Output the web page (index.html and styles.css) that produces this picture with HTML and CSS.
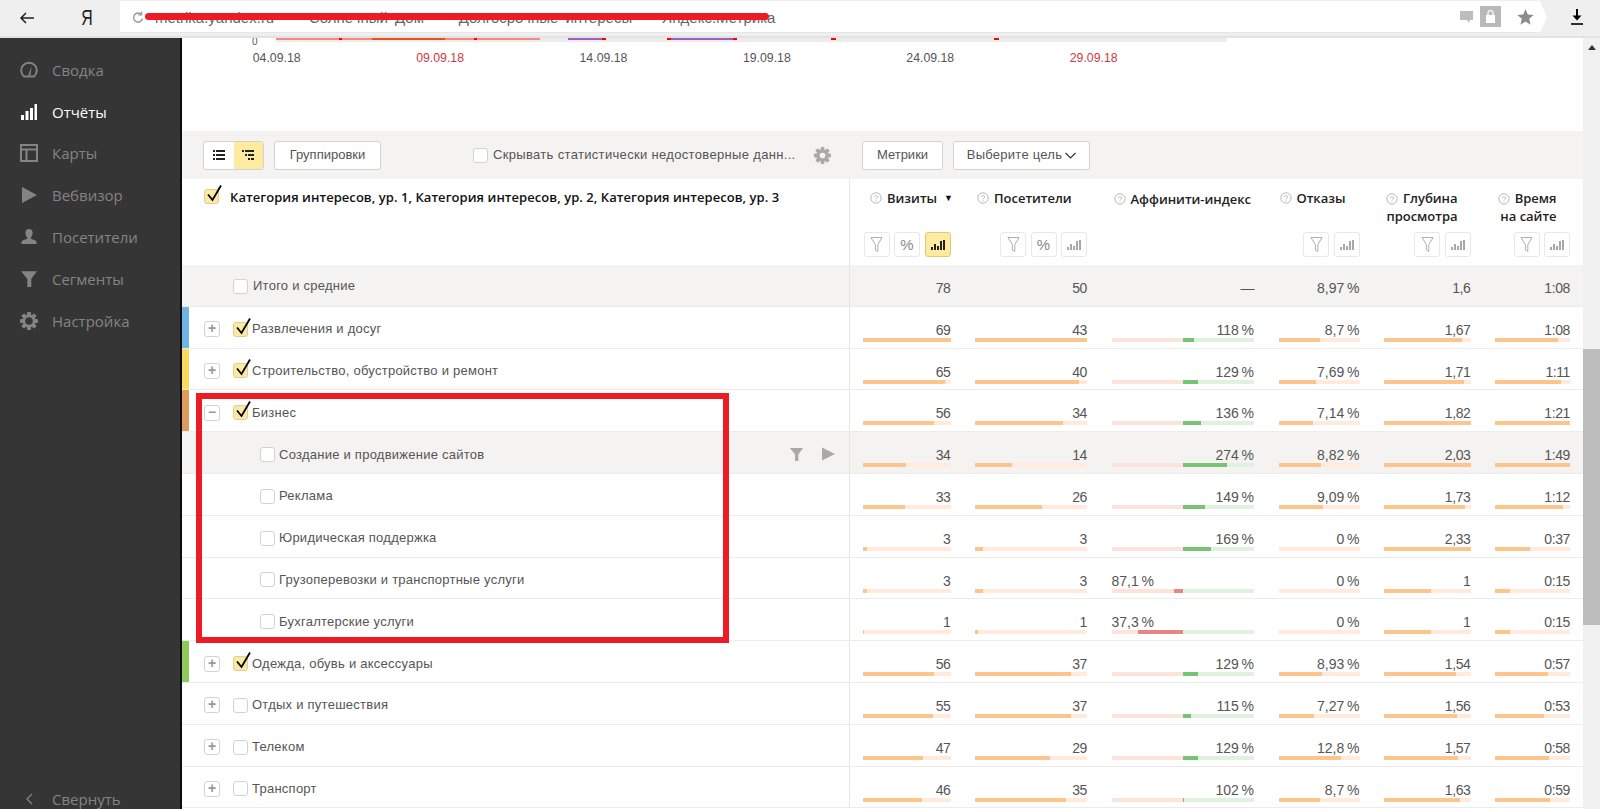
FILE: index.html
```html
<!DOCTYPE html>
<html lang="ru">
<head>
<meta charset="utf-8">
<title>Долгосрочные интересы — Яндекс.Метрика</title>
<link rel="stylesheet" href="styles.css">
</head>
<body>
<svg class="defs" width="0" height="0">
  <symbol id="i-check" viewBox="0 0 18 20"><path d="M3 10.5 L7.5 16 L16 1.5" fill="none" stroke="#000" stroke-width="1.8"/></symbol>
  <symbol id="i-funnel" viewBox="0 0 16 16"><path d="M1 1H15L10 8V15H6.5V8Z"/></symbol>
  <symbol id="i-funnel-o" viewBox="0 0 14 18"><path d="M1 1.5H13L8.4 9V16.5L5.8 15V9Z" fill="none" stroke="#a8a8a8"/></symbol>
  <symbol id="i-bars" viewBox="0 0 14 10"><path d="M0 7h2v3H0zM3 4h2v6H3zM6 6h2v4H6zM9 1h2v9H9zM12 0h2v10h-2z"/></symbol>
  <symbol id="i-help" viewBox="0 0 12 12"><circle cx="6" cy="6" r="5.2" fill="none" stroke="#bbb"/><path d="M4.4 4.8C4.4 3.2 7.7 3.2 7.7 4.9 7.7 6 6 5.9 6 7.3M6 8.3v1.1" fill="none" stroke="#bbb"/></symbol>
  <symbol id="i-gear" viewBox="0 0 18 18"><g><rect x="7" y="0" width="4" height="18" rx="1"/><rect x="7" y="0" width="4" height="18" rx="1" transform="rotate(45 9 9)"/><rect x="7" y="0" width="4" height="18" rx="1" transform="rotate(90 9 9)"/><rect x="7" y="0" width="4" height="18" rx="1" transform="rotate(135 9 9)"/></g><circle cx="9" cy="9" r="6.5"/></symbol>
</svg>

<header class="topbar">
  <svg class="tb-back" width="16" height="12" viewBox="0 0 16 12"><path d="M15 6H2M7 1L2 6l5 5" fill="none" stroke="#222" stroke-width="1.5"/></svg>
  <span class="tb-ya">Я</span>
  <div class="addr">
    <svg class="addr-reload" width="12" height="14" viewBox="0 0 12 14"><path d="M9.5 4.5A4.5 4.5 0 1 0 10.5 8.5M9.6 1.5v3.4H6.2" fill="none" stroke="#999" stroke-width="1.4"/></svg>
    <span class="addr-text">metrika.yandex.ru — "Солнечный Дом" — Долгосрочные интересы — Яндекс.Метрика</span>
    <span class="addr-icons">
      <svg width="13" height="12" viewBox="0 0 13 12"><path d="M0 0H13V9H10L9 12 7 9H0Z" fill="#bdbdbd"/></svg>
      <span class="lockbox"><svg width="9" height="13" viewBox="0 0 9 13"><path d="M2 5V3a2.5 2.5 0 0 1 5 0v2" fill="none" stroke="#fff" stroke-width="1.2"/><rect y="5" width="9" height="8" fill="#fff"/></svg></span>
      <svg width="17" height="16" viewBox="0 0 17 16"><path d="M8.5 0l2.3 5.5 5.9.5-4.5 3.8 1.4 5.9-5.1-3.1-5.1 3.1 1.4-5.9L.3 6l5.9-.5z" fill="#8c8c8c"/></svg>
    </span>
  </div>
  <svg class="tb-dl" width="12" height="16" viewBox="0 0 12 16"><path d="M6 0v9" stroke="#000" stroke-width="2"/><path d="M1.5 6.5H10.500L6 11.500Z" fill="#000"/><path d="M0 15h12" stroke="#000" stroke-width="1.6"/></svg>
</header>
<div class="redact"></div>

<div class="app">
  <nav class="side">
    <a class="side-item"><svg class="side-icon" viewBox="0 0 18 18"><path d="M4 15.500A7.800 7.800 0 1 1 14 15.500Z" fill="none" stroke="#848484" stroke-width="2"/><path d="M8 14.500L11.500 5.500 10.500 14.500Z" fill="#848484"/></svg>Сводка</a>
    <a class="side-item active"><svg class="side-icon" viewBox="0 0 18 18"><path d="M1 12h3v5H1zM5.500 8h3v9h-3zM10 5h3v12h-3zM14.500 1h2.500v16h-2.500z" fill="#fff"/></svg>Отчёты</a>
    <a class="side-item"><svg class="side-icon" viewBox="0 0 18 18"><path d="M1 1h16v16H1zM1 5.500h16M6.500 5.500V17" fill="none" stroke="#848484" stroke-width="2"/></svg>Карты</a>
    <a class="side-item"><svg class="side-icon" viewBox="0 0 18 18"><path d="M2 1L17 9 2 17Z" fill="#848484"/></svg>Вебвизор</a>
    <a class="side-item"><svg class="side-icon" viewBox="0 0 18 18"><path d="M9 1c2.600 0 3.800 2 3.600 4.500-.2 2-1 3.300-1.800 4 0 1 .6 1.500 2.200 2.100 2 .8 3.600 1.300 3.600 3.400v1H1.400v-1c0-2.100 1.600-2.600 3.600-3.400 1.600-.6 2.200-1.100 2.200-2.100-.8-.7-1.600-2-1.800-4C5.200 3 6.400 1 9 1z" fill="#848484"/></svg>Посетители</a>
    <a class="side-item"><svg class="side-icon funnel" viewBox="0 0 16 16"><use href="#i-funnel"/></svg>Сегменты</a>
    <a class="side-item"><svg class="side-icon gear" viewBox="0 0 18 18"><use href="#i-gear"/><circle cx="9" cy="9" r="3.800" fill="#353535"/></svg>Настройка</a>
    <a class="side-item side-foot"><svg class="side-chev" width="7" height="12" viewBox="0 0 7 12"><path d="M6 1L1 6l5 5" fill="none" stroke="#848484" stroke-width="1.300"/></svg>Свернуть</a>
  </nav>

  <main class="content">
    <section class="chart">
      <div class="chart-strip">
        <span class="chart-zero">0</span>
        <div class="chart-track">
          <i class="seg pink" style="left:0;width:264px"></i>
          <i class="seg dark" style="left:96px;width:73px"></i>
          <i class="seg red" style="left:63px;width:3px"></i>
          <i class="seg red" style="left:198px;width:3px"></i>
          <i class="seg violet" style="left:292px;width:37px"></i>
          <i class="seg red" style="left:326px;width:4px"></i>
          <i class="seg violet" style="left:391px;width:70px"></i>
          <i class="seg red" style="left:391px;width:4px"></i>
          <i class="seg red" style="left:457px;width:4px"></i>
          <i class="seg red" style="left:555px;width:5px"></i>
          <i class="seg red" style="left:718px;width:5px"></i>
        </div>
      </div>
      <div class="dates">
        <span>04.09.18</span><span class="hol">09.09.18</span><span>14.09.18</span><span>19.09.18</span><span>24.09.18</span><span class="hol">29.09.18</span>
      </div>
    </section>

    <section class="toolbar">
      <div class="tb-left">
        <div class="seggroup">
          <span class="segbtn"><svg width="12" height="10" viewBox="0 0 12 10"><path d="M0 0h2v2H0zM3 0h9v2H3zM0 4h2v2H0zM3 4h9v2H3zM0 8h2v2H0zM3 8h9v2H3z" fill="#222"/></svg></span>
          <span class="segbtn on"><svg width="12" height="10" viewBox="0 0 12 10"><path d="M0 0h2v2H0zM3 0h9v2H3zM3 4h2v2H3zM6 4h6v2H6zM6 8h2v2H6zM9 8h3v2H9z" fill="#222"/></svg></span>
        </div>
        <span class="btn btn-group">Группировки</span>
        <span class="cb tb-cb"></span>
        <span class="tb-hide">Скрывать статистически недостоверные данн...</span>
        <svg class="tb-gear" width="17" height="17" viewBox="0 0 18 18"><use href="#i-gear"/><circle cx="9" cy="9" r="3" fill="#f4f3f1"/></svg>
      </div>
      <div class="tb-right">
        <span class="btn btn-metrics">Метрики</span>
        <span class="btn btn-goal"><span class="goal-text">Выберите цель</span><svg width="11" height="7" viewBox="0 0 11 7"><path d="M.5 1l5 5 5-5" fill="none" stroke="#333" stroke-width="1.200"/></svg></span>
      </div>
    </section>

    <section class="thead">
      <div class="th-main">
        <span class="cb on"><svg class="chk"><use href="#i-check"/></svg></span>
        <span class="th-title">Категория интересов, ур. 1, Категория интересов, ур. 2, Категория интересов, ур. 3</span>
      </div>
      <div class="th-cols grid">
        <div class="th">
          <div class="th-label th-visits"><svg class="help"><use href="#i-help"/></svg><b>Визиты</b><span class="sort">▼</span></div>
          <div class="th-tools"><span class="tool"><svg class="t-f"><use href="#i-funnel-o"/></svg></span><span class="tool pct">%</span><span class="tool on"><svg class="t-b"><use href="#i-bars"/></svg></span></div>
        </div>
        <div class="th">
          <div class="th-label th-users"><svg class="help"><use href="#i-help"/></svg><b>Посетители</b></div>
          <div class="th-tools"><span class="tool"><svg class="t-f"><use href="#i-funnel-o"/></svg></span><span class="tool pct">%</span><span class="tool"><svg class="t-b"><use href="#i-bars"/></svg></span></div>
        </div>
        <div class="th">
          <div class="th-label th-aff"><svg class="help"><use href="#i-help"/></svg><b>Аффинити-индекс</b></div>
        </div>
        <div class="th">
          <div class="th-label th-bounce"><svg class="help"><use href="#i-help"/></svg><b>Отказы</b></div>
          <div class="th-tools"><span class="tool"><svg class="t-f"><use href="#i-funnel-o"/></svg></span><span class="tool"><svg class="t-b"><use href="#i-bars"/></svg></span></div>
        </div>
        <div class="th">
          <div class="th-label th-two"><span><svg class="help"><use href="#i-help"/></svg><b>Глубина</b></span><b>просмотра</b></div>
          <div class="th-tools"><span class="tool"><svg class="t-f"><use href="#i-funnel-o"/></svg></span><span class="tool"><svg class="t-b"><use href="#i-bars"/></svg></span></div>
        </div>
        <div class="th">
          <div class="th-label th-two th-time"><span><svg class="help"><use href="#i-help"/></svg><b>Время</b></span><b>на сайте</b></div>
          <div class="th-tools"><span class="tool"><svg class="t-f"><use href="#i-funnel-o"/></svg></span><span class="tool"><svg class="t-b"><use href="#i-bars"/></svg></span></div>
        </div>
      </div>
    </section>

    <section class="rows">
      <div class="row total">
        <div class="main lvl-total"><span class="cb"></span><span class="name">Итого и средние</span></div>
        <div class="cells grid"><div class="cell">78</div><div class="cell">50</div><div class="cell">—</div><div class="cell">8,97&#8239;%</div><div class="cell">1,6</div><div class="cell">1:08</div></div>
      </div>

      <div class="row">
        <div class="main st-blue"><span class="tree">+</span><span class="cb on"><svg class="chk"><use href="#i-check"/></svg></span><span class="name">Развлечения и досуг</span></div>
        <div class="cells grid">
          <div class="cell">69<i class="bar"><b style="width:100%"></b></i></div>
          <div class="cell">43<i class="bar"><b style="width:100%"></b></i></div>
          <div class="cell">118&#8239;%<i class="abar"><i class="neg"></i><i class="pos"><b style="width:15.6%"></b></i></i></div>
          <div class="cell">8,7&#8239;%<i class="bar"><b style="width:51%"></b></i></div>
          <div class="cell">1,67<i class="bar"><b style="width:90%"></b></i></div>
          <div class="cell">1:08<i class="bar"><b style="width:84%"></b></i></div>
        </div>
      </div>

      <div class="row">
        <div class="main st-yellow"><span class="tree">+</span><span class="cb on"><svg class="chk"><use href="#i-check"/></svg></span><span class="name">Строительство, обустройство и ремонт</span></div>
        <div class="cells grid">
          <div class="cell">65<i class="bar"><b style="width:94%"></b></i></div>
          <div class="cell">40<i class="bar"><b style="width:93%"></b></i></div>
          <div class="cell">129&#8239;%<i class="abar"><i class="neg"></i><i class="pos"><b style="width:21%"></b></i></i></div>
          <div class="cell">7,69&#8239;%<i class="bar"><b style="width:46%"></b></i></div>
          <div class="cell">1,71<i class="bar"><b style="width:92%"></b></i></div>
          <div class="cell">1:11<i class="bar"><b style="width:88%"></b></i></div>
        </div>
      </div>

      <div class="row">
        <div class="main st-orange"><span class="tree minus">−</span><span class="cb on"><svg class="chk"><use href="#i-check"/></svg></span><span class="name">Бизнес</span></div>
        <div class="cells grid">
          <div class="cell">56<i class="bar"><b style="width:81%"></b></i></div>
          <div class="cell">34<i class="bar"><b style="width:79%"></b></i></div>
          <div class="cell">136&#8239;%<i class="abar"><i class="neg"></i><i class="pos"><b style="width:25.3%"></b></i></i></div>
          <div class="cell">7,14&#8239;%<i class="bar"><b style="width:43%"></b></i></div>
          <div class="cell">1,82<i class="bar"><b style="width:100%"></b></i></div>
          <div class="cell">1:21<i class="bar"><b style="width:100%"></b></i></div>
        </div>
      </div>

      <div class="row hover">
        <div class="main child"><span class="cb"></span><span class="name">Создание и продвижение сайтов</span>
          <span class="row-acts"><svg class="act-f"><use href="#i-funnel"/></svg><svg class="act-p" viewBox="0 0 14 14"><path d="M0 0L14 7 0 14Z"/></svg></span>
        </div>
        <div class="cells grid">
          <div class="cell">34<i class="bar"><b style="width:49%"></b></i></div>
          <div class="cell">14<i class="bar"><b style="width:33%"></b></i></div>
          <div class="cell">274&#8239;%<i class="abar"><i class="neg"></i><i class="pos"><b style="width:62.600%"></b></i></i></div>
          <div class="cell">8,82&#8239;%<i class="bar"><b style="width:52%"></b></i></div>
          <div class="cell">2,03<i class="bar"><b style="width:100%"></b></i></div>
          <div class="cell">1:49<i class="bar"><b style="width:100%"></b></i></div>
        </div>
      </div>

      <div class="row">
        <div class="main child"><span class="cb"></span><span class="name">Реклама</span></div>
        <div class="cells grid">
          <div class="cell">33<i class="bar"><b style="width:48%"></b></i></div>
          <div class="cell">26<i class="bar"><b style="width:60%"></b></i></div>
          <div class="cell">149&#8239;%<i class="abar"><i class="neg"></i><i class="pos"><b style="width:31.300%"></b></i></i></div>
          <div class="cell">9,09&#8239;%<i class="bar"><b style="width:54.500%"></b></i></div>
          <div class="cell">1,73<i class="bar"><b style="width:94%"></b></i></div>
          <div class="cell">1:12<i class="bar"><b style="width:91%"></b></i></div>
        </div>
      </div>

      <div class="row">
        <div class="main child"><span class="cb"></span><span class="name">Юридическая поддержка</span></div>
        <div class="cells grid">
          <div class="cell">3<i class="bar"><b style="width:4.500%"></b></i></div>
          <div class="cell">3<i class="bar"><b style="width:7%"></b></i></div>
          <div class="cell">169&#8239;%<i class="abar"><i class="neg"></i><i class="pos"><b style="width:39.400%"></b></i></i></div>
          <div class="cell">0&#8239;%<i class="bar"></i></div>
          <div class="cell">2,33<i class="bar"><b style="width:100%"></b></i></div>
          <div class="cell">0:37<i class="bar"><b style="width:46%"></b></i></div>
        </div>
      </div>

      <div class="row">
        <div class="main child"><span class="cb"></span><span class="name">Грузоперевозки и транспортные услуги</span></div>
        <div class="cells grid">
          <div class="cell">3<i class="bar"><b style="width:4.500%"></b></i></div>
          <div class="cell">3<i class="bar"><b style="width:7%"></b></i></div>
          <div class="cell low">87,1&#8239;%<i class="abar"><i class="neg"><b style="width:12.200%"></b></i><i class="pos"></i></i></div>
          <div class="cell">0&#8239;%<i class="bar"></i></div>
          <div class="cell">1<i class="bar"><b style="width:54.500%"></b></i></div>
          <div class="cell">0:15<i class="bar"><b style="width:19.600%"></b></i></div>
        </div>
      </div>

      <div class="row">
        <div class="main child"><span class="cb"></span><span class="name">Бухгалтерские услуги</span></div>
        <div class="cells grid">
          <div class="cell">1<i class="bar"><b style="width:1.500%"></b></i></div>
          <div class="cell">1<i class="bar"><b style="width:2.500%"></b></i></div>
          <div class="cell low">37,3&#8239;%<i class="abar"><i class="neg"><b style="width:62.600%"></b></i><i class="pos"></i></i></div>
          <div class="cell">0&#8239;%<i class="bar"></i></div>
          <div class="cell">1<i class="bar"><b style="width:54.500%"></b></i></div>
          <div class="cell">0:15<i class="bar"><b style="width:19.600%"></b></i></div>
        </div>
      </div>

      <div class="row">
        <div class="main st-green"><span class="tree">+</span><span class="cb on"><svg class="chk"><use href="#i-check"/></svg></span><span class="name">Одежда, обувь и аксессуары</span></div>
        <div class="cells grid">
          <div class="cell">56<i class="bar"><b style="width:81%"></b></i></div>
          <div class="cell">37<i class="bar"><b style="width:86%"></b></i></div>
          <div class="cell">129&#8239;%<i class="abar"><i class="neg"></i><i class="pos"><b style="width:21%"></b></i></i></div>
          <div class="cell">8,93&#8239;%<i class="bar"><b style="width:53.500%"></b></i></div>
          <div class="cell">1,54<i class="bar"><b style="width:83%"></b></i></div>
          <div class="cell">0:57<i class="bar"><b style="width:70%"></b></i></div>
        </div>
      </div>

      <div class="row">
        <div class="main"><span class="tree">+</span><span class="cb"></span><span class="name">Отдых и путешествия</span></div>
        <div class="cells grid">
          <div class="cell">55<i class="bar"><b style="width:80%"></b></i></div>
          <div class="cell">37<i class="bar"><b style="width:86%"></b></i></div>
          <div class="cell">115&#8239;%<i class="abar"><i class="neg"></i><i class="pos"><b style="width:12%"></b></i></i></div>
          <div class="cell">7,27&#8239;%<i class="bar"><b style="width:43.500%"></b></i></div>
          <div class="cell">1,56<i class="bar"><b style="width:84%"></b></i></div>
          <div class="cell">0:53<i class="bar"><b style="width:65%"></b></i></div>
        </div>
      </div>

      <div class="row">
        <div class="main"><span class="tree">+</span><span class="cb"></span><span class="name">Телеком</span></div>
        <div class="cells grid">
          <div class="cell">47<i class="bar"><b style="width:68%"></b></i></div>
          <div class="cell">29<i class="bar"><b style="width:67%"></b></i></div>
          <div class="cell">129&#8239;%<i class="abar"><i class="neg"></i><i class="pos"><b style="width:21%"></b></i></i></div>
          <div class="cell">12,8&#8239;%<i class="bar"><b style="width:76.700%"></b></i></div>
          <div class="cell">1,57<i class="bar"><b style="width:85%"></b></i></div>
          <div class="cell">0:58<i class="bar"><b style="width:72%"></b></i></div>
        </div>
      </div>

      <div class="row">
        <div class="main"><span class="tree">+</span><span class="cb"></span><span class="name">Транспорт</span></div>
        <div class="cells grid">
          <div class="cell">46<i class="bar"><b style="width:67%"></b></i></div>
          <div class="cell">35<i class="bar"><b style="width:81%"></b></i></div>
          <div class="cell">102&#8239;%<i class="abar"><i class="neg"></i><i class="pos"><b style="width:2%"></b></i></i></div>
          <div class="cell">8,7&#8239;%<i class="bar"><b style="width:51%"></b></i></div>
          <div class="cell">1,63<i class="bar"><b style="width:88%"></b></i></div>
          <div class="cell">0:59<i class="bar"><b style="width:73%"></b></i></div>
        </div>
      </div>
    </section>
    <div class="highlight"></div>
  </main>

  <div class="scrollbar">
    <span class="sb-up"></span>
    <span class="sb-thumb"></span>
  </div>
</div>
</body>
</html>
```
FILE: styles.css
```css
* { box-sizing: border-box; }
html, body { margin: 0; height: 100%; overflow: hidden; }
body { width: 1600px; height: 809px; font: 13px/16px "Liberation Sans", Arial, sans-serif; color: #555; background: #fff; position: relative; }
.defs { position: absolute; }

.topbar { height: 38px; background: #efefef; border-bottom: 2px solid #e3e3e3; display: flex; align-items: flex-start; }
.tb-back { margin: 12px 0 0 19px; flex: none; }
.tb-ya { width: 30px; margin-left: 37px; text-align: center; font: 22px/36px "Liberation Sans", sans-serif; color: #222; flex: none; transform: scaleX(.72); }
.addr { margin: 1px 0 0 18px; width: 1427px; height: 32px; background: #fff; border-bottom: 1px solid #e6e6e6; display: flex; align-items: center; padding-left: 12px; clip-path: polygon(0 0, 1420px 0, 100% 50%, 1420px 100%, 0 100%); }
.addr-reload { flex: none; }
.addr-text { margin-left: 11px; font-size: 15px; line-height: 32px; padding-top: 3px; color: #666; white-space: nowrap; width: 625px; overflow: hidden; word-spacing: 3px; }
.addr-icons { margin-left: auto; margin-right: 13px; display: flex; align-items: center; gap: 7px; }
.lockbox { width: 21px; height: 21px; background: #b9b9b9; display: flex; align-items: center; justify-content: center; margin-right: 9px; }
.tb-dl { margin: 9px 0 0 24px; flex: none; }
.redact { position: absolute; left: 145px; top: 13px; width: 624px; height: 7px; background: #ed1c24; border-radius: 4px; }

.app { display: flex; height: 771px; }
.side { width: 182px; flex: none; background: #353535; border-right: 2px solid #0c0c0c; display: flex; flex-direction: column; padding-top: 11px; position: relative; }
.side-item { height: 41.8px; display: flex; align-items: center; padding-left: 20px; font: 15px/20px "Open Sans", sans-serif; color: #848484; }
.side-item.active { color: #fff; }
.side-icon { width: 18px; height: 18px; margin-right: 14px; flex: none; }
.funnel { fill: #848484; }
.gear { fill: #848484; }
.side-foot { margin-top: auto; height: 24px; padding-left: 26px; margin-bottom: -2px; }
.side-chev { margin-right: 19px; }

.content { width: 1401px; flex: none; position: relative; overflow: hidden; }
.chart { height: 93px; }
.chart-strip { height: 4px; display: flex; position: relative; padding-left: 93.5px; }
.chart-zero { position: absolute; left: 70px; top: -1px; font-size: 10px; line-height: 10px; color: #555; }
.chart-track { width: 951px; height: 4px; background: #ececec; position: relative; }
.seg { position: absolute; top: 0; height: 2px; display: block; }
.pink { background: #f58a80; }
.dark { background: #e8501e; }
.red { background: #f00; }
.violet { background: #a05cc0; }
.dates { display: grid; grid-template-columns: repeat(6, 163.4px); margin: 8px 0 0 13px; font-size: 12.3px; line-height: 16px; color: #555; text-align: center; }
.hol { color: #d0383f; }

.toolbar { height: 48px; background: #f4f3f1; display: flex; }
.tb-left { width: 667px; display: flex; align-items: center; padding-left: 21px; flex: none; }
.tb-right { display: flex; align-items: center; padding-left: 13px; gap: 10px; }
.seggroup { display: flex; height: 29px; width: 61px; border: 1px solid #d3d2cf; border-radius: 3px; background: #fff; overflow: hidden; }
.segbtn { flex: 1; display: flex; align-items: center; justify-content: center; }
.segbtn.on { background: #ffeba0; }
.btn { height: 29px; border: 1px solid #d3d2cf; border-radius: 3px; background: #fff; display: flex; align-items: center; justify-content: center; color: #555; font-size: 13px; }
.btn-group { width: 107px; margin-left: 10px; }
.btn-metrics { width: 81px; }
.btn-goal { width: 137px; gap: 3px; }
.goal-text { letter-spacing: .25px; }
.tb-cb { margin-left: 92px; }
.tb-hide { margin-left: 5px; white-space: nowrap; width: 304px; letter-spacing: .33px; }
.tb-gear { fill: #a9a9a9; margin-left: 17px; }

.cb { width: 15px; height: 15px; flex: none; display: inline-block; position: relative; background: #fff; border: 1px solid #d2d2d2; border-radius: 3px; }
.cb.on { background: #fde9a6; border-color: #e0cf92; }
.chk { position: absolute; left: 0; top: -6px; width: 18px; height: 20px; }

.thead { height: 86px; display: flex; }
.th-main { width: 667px; flex: none; padding: 10px 0 0 22px; display: flex; align-items: flex-start; }
.th-title { font: 600 13px/16px "Open Sans", sans-serif; color: #111; margin-left: 11px; white-space: nowrap; letter-spacing: .05px; }
.grid { display: grid; grid-template-columns: 87.5px 112px 142.5px 81px 86.5px 75px; column-gap: 24.5px; padding: 0 13px; border-left: 1px solid #e6e6e6; flex: 1; }
.th { position: relative; display: flex; flex-direction: column; }
.th-label { height: 53px; padding-top: 10px; font: 600 13px/18px "Open Sans", sans-serif; color: #222; display: flex; white-space: nowrap; letter-spacing: -.02px; }
.th-label b { font-weight: 600; }
.help { width: 12px; height: 12px; margin-right: 5px; vertical-align: -2px; flex: none; margin-top: 3px; }
.th-visits { padding-left: 7px; }
.sort { font-size: 9px; margin-left: 7px; color: #111; }
.th-users { padding-left: 2px; }
.th-aff { padding-left: 2px; padding-top: 11px; }
.th-bounce { padding-left: 1px; }
.th-two { flex-direction: column; align-items: flex-end; padding-right: 13px; }
.th-time { padding-right: 13.5px; }
.th-tools { display: flex; justify-content: flex-end; gap: 4.5px; }
.tool { width: 26px; height: 25px; border: 1px solid #e8e8e8; border-radius: 3px; background: #fff; display: flex; align-items: center; justify-content: center; color: #888; font-size: 15px; }
.tool.on { background: #ffeba0; border-color: #dcc980; }
.t-f { width: 13px; height: 17px; }
.t-b { width: 14px; height: 10px; fill: #a8a8a8; }
.tool.on .t-b { fill: #222; }

.rows { display: block; }
.row { height: 41.8px; display: flex; border-bottom: 1px solid #ececec; }
.row.total, .row.hover { background: #f4f3f1; }
.row.total .main { padding-left: 44px; padding-top: 2px; }
.row.total .name { margin-left: 5px; }
.main { width: 667px; flex: none; display: flex; align-items: center; padding: 4px 0 0 15px; border-left: 7px solid transparent; position: relative; }
.st-blue { border-left-color: #6fb4e8; }
.st-yellow { border-left-color: #fbd95d; }
.st-orange { border-left-color: #e09a5c; }
.st-green { border-left-color: #8fc95a; }
.child { padding-left: 71px; }
.tree { width: 16px; height: 16px; flex: none; border: 1px solid #d2d2d2; border-radius: 3px; color: #999; font: 700 14px/13px "Liberation Sans", sans-serif; text-align: center; margin-right: 13px; background: #fff; }
.name { margin-left: 4px; white-space: nowrap; letter-spacing: .25px; }
.row-acts { position: absolute; left: 600px; top: 15px; display: flex; gap: 18px; fill: #a9a9a9; }
.act-f { width: 15px; height: 15px; }
.act-p { width: 13px; height: 14px; }
.cells { align-content: start; }
.cell { text-align: right; padding-top: 15px; font-size: 14px; letter-spacing: -.4px; line-height: 16px; color: #555; position: relative; }
.cell.low { text-align: left; }
.bar { display: block; height: 4px; background: #ffeadb; }
.bar b { display: block; height: 100%; background: #fdc48c; }
.abar { display: flex; height: 4px; }
.neg { flex: 1; display: flex; justify-content: flex-end; background: #fde3dc; }
.pos { flex: 1; display: block; background: #e1f1e0; }
.pos b { display: block; height: 100%; background: #76c474; }
.neg b { display: block; height: 100%; background: #ea8585; }

.highlight { position: absolute; left: 14px; top: 354.5px; width: 533px; height: 250px; border: 6px solid #ed1c24; }

.scrollbar { width: 17px; flex: none; background: #f1f1f1; position: relative; }
.sb-up { position: absolute; left: 5px; top: 7px; border: 4px solid transparent; border-top: 0; border-bottom: 5px solid #333; }
.sb-thumb { position: absolute; left: 0; top: 311px; width: 17px; height: 276px; background: #bcbcbc; }
```
